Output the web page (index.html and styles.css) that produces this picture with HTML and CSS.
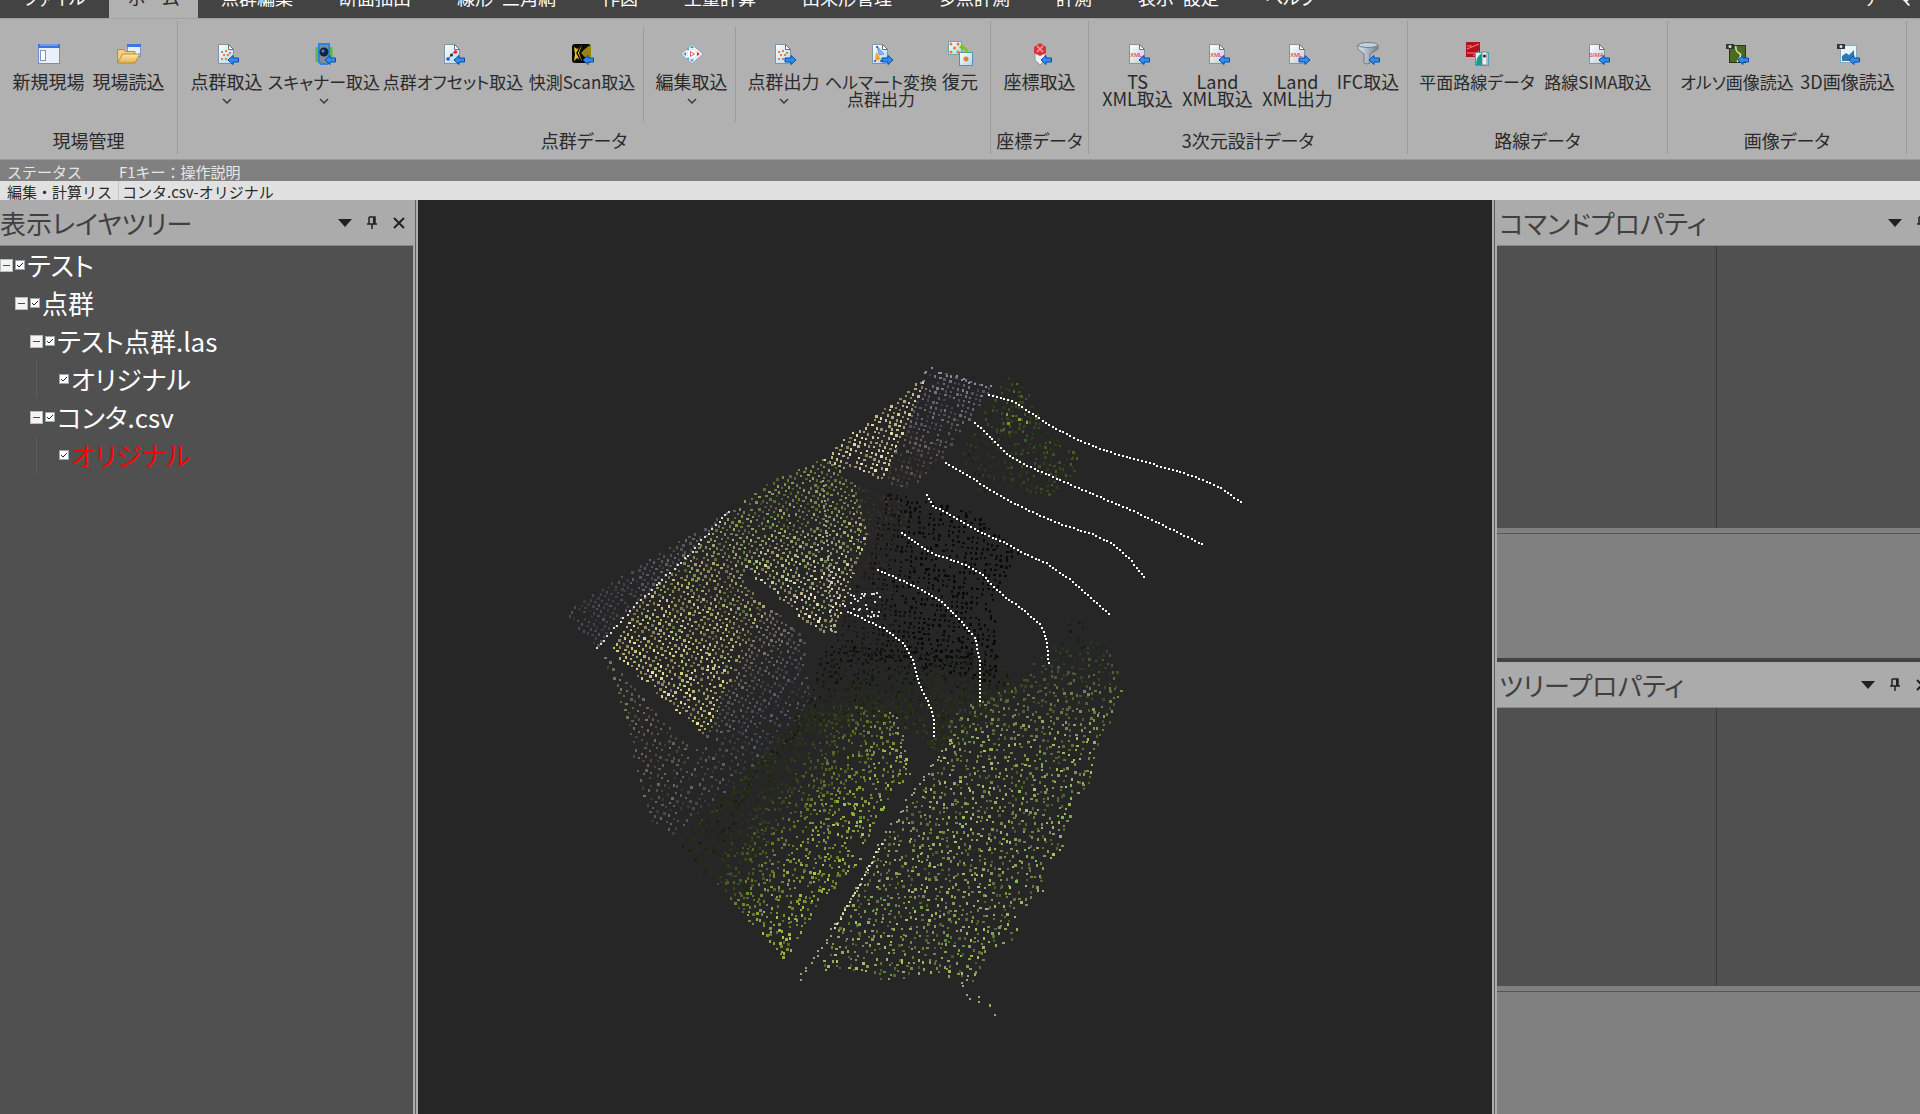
FILE: index.html
```html
<!DOCTYPE html>
<html lang="ja">
  <head>
    <meta charset="UTF-8" />
    <meta name="viewport" content="width=device-width, initial-scale=1.0" />
    <title>点群編集</title>
    <link rel="stylesheet" href="styles.css" />
  </head>
  <body>
    <!-- 共通アイコン -->
    <svg class="defs" width="0" height="0" aria-hidden="true">
      <defs>
        <linearGradient id="paper" x1="0" y1="0" x2="1" y2="1">
          <stop offset="0" stop-color="#fff" />
          <stop offset="1" stop-color="#a9d8ee" />
        </linearGradient>
        <linearGradient id="paper2" x1="0" y1="0" x2="1" y2="1">
          <stop offset="0" stop-color="#fff" />
          <stop offset="1" stop-color="#c3cbd6" />
        </linearGradient>
        <linearGradient id="folder" x1="0" y1="0" x2="0" y2="1">
          <stop offset="0" stop-color="#ffe9a8" />
          <stop offset="1" stop-color="#e5b050" />
        </linearGradient>
        <linearGradient id="steel" x1="0" y1="0" x2="1" y2="0">
          <stop offset="0" stop-color="#dfe8ee" />
          <stop offset="1" stop-color="#71828f" />
        </linearGradient>
      </defs>
      <symbol id="doc" viewBox="0 0 26 26">
        <path d="M4.500 3.500h10l5 5v14h-15z" fill="url(#paper)" stroke="#7f93a3" />
        <path d="M14.500 3.500v5h5z" fill="#fff" stroke="#66727d" />
      </symbol>
      <symbol id="doc2" viewBox="0 0 26 26">
        <path d="M4.500 3.500h10l5 5v14h-15z" fill="url(#paper2)" stroke="#8791a0" />
        <path d="M14.500 3.500v5h5z" fill="#fff" stroke="#66727d" />
      </symbol>
      <symbol id="in" viewBox="0 0 26 26">
        <path d="M14 19l5-4.500v2.500h5.500v4H19v2.500z" fill="#2f8df0" stroke="#0b4aa8" />
      </symbol>
      <symbol id="out" viewBox="0 0 26 26">
        <path d="M25 19l-5-4.500v2.500h-6v4h6v2.500z" fill="#2f8df0" stroke="#0b4aa8" />
      </symbol>
      <symbol id="dots" viewBox="0 0 26 26">
        <g fill="#ee7a45">
          <rect x="7" y="10" width="2" height="2" /><rect x="11" y="9" width="2" height="2" />
          <rect x="15" y="11" width="2" height="2" /><rect x="9" y="13" width="2" height="2" />
          <rect x="13" y="13" width="2" height="2" /><rect x="7" y="17" width="2" height="2" />
          <rect x="11" y="17" width="2" height="2" />
        </g>
      </symbol>
      <symbol id="chev" viewBox="0 0 10 6">
        <path d="M1 1l4 4 4-4" fill="none" stroke="#3a3a3a" stroke-width="1.500" />
      </symbol>
      <symbol id="pin" viewBox="0 0 12 14">
        <path d="M3 1h6v7M3 1v7M1 8h10M6 8v5" fill="none" stroke="#222" stroke-width="1.500" />
        <path d="M7 1h2v7H7z" fill="#222" />
      </symbol>
      <symbol id="close" viewBox="0 0 12 12">
        <path d="M1 1l10 10M11 1L1 11" stroke="#222" stroke-width="2" />
      </symbol>
      <symbol id="down" viewBox="0 0 14 8">
        <path d="M0 0h14L7 8z" fill="#222" />
      </symbol>
    </svg>

    <nav class="tabs">
      <button class="tab tab-file">ファイル</button>
      <button class="tab tab-home current">ホーム</button>
      <button class="tab">点群編集</button>
      <button class="tab">断面抽出</button>
      <button class="tab">線形･三角網</button>
      <button class="tab">作図</button>
      <button class="tab">土量計算</button>
      <button class="tab">出来形管理</button>
      <button class="tab">多点計測</button>
      <button class="tab">計測</button>
      <button class="tab">表示･設定</button>
      <button class="tab">ヘルプ</button>
      <button class="tab tab-theme">テーマ</button>
    </nav>

    <div class="ribbon">
      <section class="group">
        <div class="tools">
          <button class="tool w4">
            <svg class="icon" viewBox="0 0 26 26">
              <rect x="2.500" y="3.500" width="21" height="19" fill="#e9effc" stroke="#6f8fd0" />
              <path d="M2 3h22v4H2z" fill="#3f74dc" />
              <path d="M4 4h18" stroke="#9fc0ff" />
              <rect x="4.500" y="9.500" width="5" height="10" fill="#fff" stroke="#8494b8" />
            </svg>
            <span>新規現場</span>
          </button>
          <button class="tool w4">
            <svg class="icon" viewBox="0 0 26 26">
              <rect x="11.500" y="3.500" width="13" height="12" fill="#e9effc" stroke="#7c95cc" />
              <path d="M11 3h14v3H11z" fill="#3f74dc" />
              <path d="M1.500 21V8.500h6l2 2H19v4" fill="#f3cf7c" stroke="#b98a3a" />
              <path d="M1.500 22l5-9H24l-5 9z" fill="url(#folder)" stroke="#b98a3a" />
            </svg>
            <span>現場読込</span>
          </button>
        </div>
        <h2>現場管理</h2>
      </section>

      <section class="group">
        <div class="tools">
          <button class="tool w4">
            <svg class="icon" viewBox="0 0 26 26"><use href="#doc" /><use href="#dots" /><use href="#in" /></svg>
            <span>点群取込</span>
            <svg class="chev"><use href="#chev" /></svg>
          </button>
          <button class="tool w6">
            <svg class="icon" viewBox="0 0 26 26">
              <path d="M6 6v15M20 6v15" stroke="#58b948" stroke-width="3" />
              <path d="M8 3h10v18l-2 2h-6l-2-2z" fill="#7f8b98" stroke="#2c83e6" stroke-width="2" />
              <circle cx="13" cy="11" r="4.500" fill="#15233c" />
              <circle cx="12" cy="10" r="1.500" fill="#4c8ad8" />
              <use href="#in" />
            </svg>
            <span>スキャナー取込</span>
            <svg class="chev"><use href="#chev" /></svg>
          </button>
          <button class="tool w8">
            <svg class="icon" viewBox="0 0 26 26">
              <use href="#doc" />
              <path d="M8 18l7-8" stroke="#5a6a86" />
              <circle cx="8" cy="18" r="1.800" fill="#2c50d8" />
              <circle cx="11.500" cy="14" r="1.600" fill="#334" />
              <circle cx="15.500" cy="11" r="1.800" fill="#e22" />
              <use href="#in" />
            </svg>
            <span>点群オフセット取込</span>
          </button>
          <button class="tool w6">
            <svg class="icon" viewBox="0 0 26 26">
              <rect x="3" y="3" width="19" height="19" rx="3" fill="#080806" />
              <path d="M22 4v16q-5-2-10-8 5-6 10-8z" fill="#9a8212" />
              <path d="M5 6l3 2 5-4-3 8 3 8-5-3-3 3 1-7z" fill="#e8c31a" />
              <path d="M12 4l-4 8 4 8" fill="none" stroke="#080806" stroke-width="1.500" />
              <use href="#in" />
            </svg>
            <span>快測Scan取込</span>
          </button>
          <i class="sep"></i>
          <button class="tool w4">
            <svg class="icon" viewBox="0 0 26 26">
              <path d="M13 3.500L24 13 13 22.500 2 13z" fill="#f4f7fb" stroke="#9aa5b3" />
              <circle cx="13" cy="13" r="5" fill="#fff" stroke="#d4dbe4" />
              <path d="M11.500 10.500l4 2.500-4 2.500z" fill="none" stroke="#d66565" />
              <path d="M4 13l3-2v4zM13 4.500l2 2.500h-4zM13 21l2-2.500h-4zM7 9l3-2v2zM7 17l3 2v-2z" fill="#3a9ac6" />
              <path d="M18 11l3 2-3 2z" fill="#e22c2c" />
            </svg>
            <span>編集取込</span>
            <svg class="chev"><use href="#chev" /></svg>
          </button>
          <i class="sep"></i>
          <button class="tool w4">
            <svg class="icon" viewBox="0 0 26 26"><use href="#doc" /><use href="#dots" /><use href="#out" /></svg>
            <span>点群出力</span>
            <svg class="chev"><use href="#chev" /></svg>
          </button>
          <button class="tool w6">
            <svg class="icon" viewBox="0 0 26 26">
              <use href="#doc" />
              <path d="M9 5l7 8-5 1z" fill="#8cb2f0" stroke="#4569c0" stroke-width=".5" />
              <path d="M8 11l5 7-6 2z" fill="#f5a32c" />
              <circle cx="9" cy="6" r="1" fill="#2548b8" /><circle cx="7" cy="20" r="1" fill="#2548b8" />
              <circle cx="13" cy="20" r="1" fill="#2548b8" />
              <use href="#out" />
            </svg>
            <span>ヘルマート変換<br />点群出力</span>
          </button>
          <button class="tool w2">
            <svg class="icon" viewBox="0 0 26 26">
              <rect x="1.500" y="0.500" width="13" height="13" fill="url(#paper)" stroke="#6aa6b6" />
              <g fill="#ee7a30">
                <circle cx="4" cy="3" r="1.500" /><circle cx="11" cy="3" r="1.500" /><circle cx="7.500" cy="7" r="1.500" />
                <circle cx="4" cy="11" r="1.500" /><circle cx="11" cy="11" r="1.500" />
              </g>
              <rect x="12.500" y="11.500" width="13" height="13" fill="url(#paper)" stroke="#5494a8" />
              <circle cx="19" cy="18" r="2.500" fill="#ee7a30" />
              <path d="M20 12q0-5-5-6" fill="none" stroke="#77c30e" stroke-width="2" />
              <path d="M16 3v6l-4-3z" fill="#77c30e" />
            </svg>
            <span>復元</span>
          </button>
        </div>
        <h2>点群データ</h2>
      </section>

      <section class="group">
        <div class="tools">
          <button class="tool w4">
            <svg class="icon" viewBox="0 0 26 26">
              <path d="M8 9h10v10l-5 5-5-5z" fill="#eceff3" stroke="#9097a2" />
              <path d="M13 2l6 4v6l-6 3-6-3V6z" fill="#d9333d" />
              <path d="M10 5l6 6M16 5l-6 6" stroke="#ff9ca0" stroke-width="1.500" />
              <use href="#in" />
            </svg>
            <span>座標取込</span>
          </button>
        </div>
        <h2>座標データ</h2>
      </section>

      <section class="group">
        <div class="tools">
          <button class="tool w4">
            <svg class="icon" viewBox="0 0 26 26"><use href="#doc2" /><text class="mark" x="5" y="16">XML</text><use href="#in" /></svg>
            <span>TS<br />XML取込</span>
          </button>
          <button class="tool w4">
            <svg class="icon" viewBox="0 0 26 26"><use href="#doc2" /><text class="mark" x="5" y="16">XML</text><use href="#in" /></svg>
            <span>Land<br />XML取込</span>
          </button>
          <button class="tool w4">
            <svg class="icon" viewBox="0 0 26 26"><use href="#doc2" /><text class="mark" x="5" y="16">XML</text><use href="#out" /></svg>
            <span>Land<br />XML出力</span>
          </button>
          <button class="tool w3">
            <svg class="icon" viewBox="0 0 26 26">
              <path d="M3 4v4l6 5v9q3 2 6 0v-9l8-5V4z" fill="url(#steel)" stroke="#6c7b88" />
              <ellipse cx="13" cy="4" rx="10" ry="2.500" fill="#c3d0d9" stroke="#71808c" />
              <use href="#in" />
            </svg>
            <span>IFC取込</span>
          </button>
        </div>
        <h2>3次元設計データ</h2>
      </section>

      <section class="group">
        <div class="tools">
          <button class="tool w7">
            <svg class="icon" viewBox="0 0 26 26">
              <rect x="2" y="1" width="14" height="15" fill="#b80f18" />
              <path d="M3 8l12-5M3 12h12M3 5h5M9 15l6-5" stroke="#ef8a8a" />
              <rect x="11.500" y="11.500" width="13" height="13" fill="#dff3f7" stroke="#4aa0b4" />
              <path d="M12 24q0-9 6-12v12z" fill="#1a9a8e" />
              <path d="M18 11h5v13h-5z" fill="#eef1f4" stroke="#7c8791" />
              <circle cx="20.500" cy="15" r="1.500" fill="#222" />
            </svg>
            <span>平面路線データ</span>
          </button>
          <button class="tool w7">
            <svg class="icon" viewBox="0 0 26 26"><use href="#doc2" /><text class="mark" x="4" y="16">SIMA</text><use href="#in" /></svg>
            <span>路線SIMA取込</span>
          </button>
        </div>
        <h2>路線データ</h2>
      </section>

      <section class="group">
        <div class="tools">
          <button class="tool w7">
            <svg class="icon" viewBox="0 0 26 26">
              <rect x="5.500" y="4.500" width="16" height="17" fill="#4a6a20" stroke="#26331a" />
              <path d="M12 5q-1 5 3 7t-2 9" fill="none" stroke="#d8e2b0" stroke-width="1.500" />
              <path d="M2 3h8v5H2z" fill="#333" /><circle cx="6" cy="5.500" r="1.500" fill="#ddd" />
              <use href="#in" />
            </svg>
            <span>オルソ画像読込</span>
          </button>
          <button class="tool w5">
            <svg class="icon" viewBox="0 0 26 26">
              <rect x="5.500" y="4.500" width="16" height="17" fill="#e8f4fc" stroke="#8ba6b8" />
              <path d="M7 20v-5l4-3 3 2 5-5v11z" fill="#2f78ae" />
              <path d="M2 3h8v5H2z" fill="#333" /><circle cx="6" cy="5.500" r="1.500" fill="#ddd" />
              <use href="#in" />
            </svg>
            <span>3D画像読込</span>
          </button>
        </div>
        <h2>画像データ</h2>
      </section>
    </div>

    <div class="status">
      <span class="cell">ステータス</span>
      <span>F1キー：操作説明</span>
    </div>
    <div class="joblist">
      <span class="cell">編集・計算リス</span>
      <span>コンタ.csv-オリジナル</span>
    </div>

    <main class="work">
      <aside class="side">
        <header class="bar">
          <h1>表示レイヤツリー</h1>
          <button class="act" aria-label="メニュー"><svg width="14" height="8"><use href="#down" /></svg></button>
          <button class="act" aria-label="固定"><svg width="12" height="14"><use href="#pin" /></svg></button>
          <button class="act" aria-label="閉じる"><svg width="12" height="12"><use href="#close" /></svg></button>
        </header>
        <ul class="tree">
          <li>
            <div class="row"><button class="fold" aria-label="折りたたむ"></button><label><input type="checkbox" checked />テスト</label></div>
            <ul>
              <li>
                <div class="row"><button class="fold" aria-label="折りたたむ"></button><label><input type="checkbox" checked />点群</label></div>
                <ul>
                  <li>
                    <div class="row"><button class="fold" aria-label="折りたたむ"></button><label><input type="checkbox" checked />テスト点群.las</label></div>
                    <ul>
                      <li><div class="row leaf"><label><input type="checkbox" checked />オリジナル</label></div></li>
                    </ul>
                  </li>
                  <li>
                    <div class="row"><button class="fold" aria-label="折りたたむ"></button><label><input type="checkbox" checked />コンタ.csv</label></div>
                    <ul>
                      <li><div class="row leaf active"><label><input type="checkbox" checked />オリジナル</label></div></li>
                    </ul>
                  </li>
                </ul>
              </li>
            </ul>
          </li>
        </ul>
      </aside>

      <div class="split"></div>
      <div class="view"><canvas id="cloud"></canvas></div>
      <div class="split"></div>

      <aside class="props">
        <section class="prop">
          <header class="bar bar-wide">
            <h1>コマンドプロパティ</h1>
            <button class="act" aria-label="メニュー"><svg width="14" height="8"><use href="#down" /></svg></button>
            <button class="act" aria-label="固定"><svg width="12" height="14"><use href="#pin" /></svg></button>
          </header>
          <div class="sheet"><div></div><div></div></div>
          <div class="note"></div>
        </section>
        <section class="prop prop-tree">
          <header class="bar bar-wide">
            <h1>ツリープロパティ</h1>
            <button class="act" aria-label="メニュー"><svg width="14" height="8"><use href="#down" /></svg></button>
            <button class="act" aria-label="固定"><svg width="12" height="14"><use href="#pin" /></svg></button>
            <button class="act" aria-label="閉じる"><svg width="12" height="12"><use href="#close" /></svg></button>
          </header>
          <div class="sheet"><div></div><div></div></div>
          <div class="note"></div>
        </section>
      </aside>
    </main>
    <script src="cloud.js"></script>
  </body>
</html>
```
FILE: styles.css
```css
* {
  margin: 0;
  padding: 0;
  box-sizing: border-box;
}

body {
  display: flex;
  flex-direction: column;
  min-height: 100vh;
  overflow: hidden;
  background-color: #808080;
  color: #2a2a2a;
  font-family: "Noto Sans CJK JP", sans-serif;
  font-size: 18px;
}

button {
  border: 0;
  background: none;
  color: inherit;
  font: inherit;
  white-space: nowrap;
  cursor: pointer;
}

ul {
  list-style: none;
}

.defs {
  position: absolute;
}

/* タブ */
.tabs {
  display: flex;
  align-items: flex-end;
  height: 18px;
  overflow: hidden;
  background-color: #434343;
  color: #fff;
  font-feature-settings: "palt";
}

.tab {
  flex: none;
  padding: 0 23px;
  line-height: 42px;
}

.tab-file {
  width: 109px;
  padding: 0;
}

.tab-home {
  width: 89px;
  padding: 0;
}

.tab-theme {
  margin-left: auto;
  padding: 0 6px;
}

.tabs .current {
  background-color: #b1b1b1;
  color: #2a2a2a;
}

/* リボン */
.ribbon {
  display: flex;
  height: 142px;
  padding: 2px 0 5px;
  border-top: 1px solid #a0a0a0;
  border-bottom: 1px solid #999;
  background-color: #b1b1b1;
  font-feature-settings: "palt";
}

.group {
  display: flex;
  flex: none;
  flex-direction: column;
  justify-content: space-between;
  padding: 0 12px;
  border-right: 1px solid #9a9a9a;
}

.group h2 {
  margin: 0 -12px 4px;
  font-size: 18px;
  font-weight: normal;
  line-height: 20px;
  text-align: center;
}

.tools {
  display: flex;
  gap: 7px;
}

.tool {
  display: flex;
  flex-direction: column;
  align-items: center;
  padding-top: 20px;
  line-height: 17px;
}

.icon {
  flex: none;
  width: 26px;
  height: 26px;
  margin-bottom: 6px;
}

.chev {
  width: 10px;
  height: 6px;
  margin-top: 8px;
}

.mark {
  fill: #e02020;
  font: 6px "Liberation Sans", sans-serif;
}

.sep {
  width: 1px;
  height: 95px;
  margin: 6px 4px 0 0;
  background-color: #9a9a9a;
}

.w2 { width: 36px; }
.w3 { width: 54px; }
.w4 { width: 73px; }
.w5 { width: 93px; }
.w6 { width: 108px; }
.w7 { width: 114px; }
.w8 { width: 136px; }

.w6,
.w7,
.w8 {
  font-size: 17px;
}

/* ステータス */
.status,
.joblist {
  display: flex;
  font-size: 15px;
  white-space: nowrap;
}

.status {
  height: 21px;
  padding-left: 7px;
  line-height: 24px;
  color: #e6e6e6;
}

.joblist {
  height: 19px;
  padding-left: 7px;
  background-color: #e1e1e1;
  line-height: 22px;
}

.cell {
  width: 112px;
}

.joblist .cell {
  margin-right: 3px;
  border-right: 1px solid #c4c4c4;
}

/* 作業エリア */
.work {
  display: grid;
  flex: 1;
  grid-template-columns: 413px 5px minmax(0, 1fr) 5px 423px;
}

.bar {
  display: flex;
  align-items: center;
  height: 46px;
  padding-right: 1px;
  border-bottom: 1px solid #8a8a8a;
  background-color: #ababab;
  color: #404040;
}

.bar h1 {
  flex: 1;
  font-size: 26px;
  font-weight: normal;
  line-height: 36px;
  white-space: nowrap;
  font-feature-settings: "palt";
}

.act {
  display: flex;
  align-items: center;
  justify-content: center;
  width: 27px;
  height: 27px;
}

.side {
  background-color: #505050;
}

.split {
  border: solid #ababab;
  border-width: 0 2px;
  background-color: #606060;
}

.tree {
  color: #fff;
  font-size: 26px;
  font-feature-settings: "palt";
}

.tree ul {
  margin-left: 15px;
}

.tree ul ul ul {
  border-left: 1px solid #5c5c5c;
  margin-left: 6px;
  padding-left: 8px;
}

.row {
  display: flex;
  align-items: center;
  gap: 2px;
  height: 38px;
}

.leaf {
  padding-left: 14px;
}

.row label {
  display: flex;
  align-items: center;
  gap: 2px;
  line-height: 38px;
  white-space: nowrap;
}

.fold {
  display: flex;
  align-items: center;
  justify-content: center;
  width: 13px;
  height: 13px;
  border: 1px solid #bbb;
  background-color: #f4f4f4;
}

.fold::before {
  width: 7px;
  height: 1px;
  background-color: #2b4bb0;
  content: "";
}

.row input {
  width: 10px;
  height: 10px;
  border: 1px solid #9aa;
  background: #fff url("data:image/svg+xml,%3Csvg xmlns='http://www.w3.org/2000/svg' viewBox='0 0 8 8'%3E%3Cpath d='M1 4l2 2 4-4' fill='none' stroke='%23222'/%3E%3C/svg%3E");
  appearance: none;
}

.active {
  color: #f00;
}

.view {
  overflow: hidden;
  background-color: #262626;
}

.view canvas {
  display: block;
}

/* プロパティ */
.props {
  display: flex;
  flex-direction: column;
  overflow: hidden;
}

.prop {
  border-bottom: 4px solid #434343;
}

.prop-tree {
  flex: 1;
  border-bottom: 0;
}

.bar-wide {
  margin-right: -15px;
  padding: 0 0 0 2px;
}

.sheet {
  display: grid;
  grid-template-columns: 220px 1fr;
  height: 282px;
  background-color: #505050;
}

.prop-tree .sheet {
  height: 278px;
}

.sheet div:first-child {
  border-right: 1px solid #3a3a3a;
}

.note {
  height: 125px;
  margin-top: 5px;
  border-top: 1px solid #555;
}
```
FILE: cloud.js
```js
var canvas = document.getElementById("cloud");
var view = canvas.parentNode;
canvas.width = view.clientWidth;
canvas.height = view.clientHeight;
var ctx = canvas.getContext("2d");

// 毎回同じ点群になるように固定シードの乱数を使う
var seed = 7;
function rnd() {
  seed = (seed * 16807) % 2147483647;
  return seed / 2147483647;
}

function dot(x, y, c, w, h) {
  ctx.fillStyle = "rgb(" + c.join(",") + ")";
  ctx.fillRect(Math.round(x), Math.round(y), w || 2, h || 2);
}

function inside(p, x, y) {
  var r = false;
  for (var i = 0, j = p.length - 1; i < p.length; j = i++) {
    if (p[i][1] > y !== p[j][1] > y &&
        x < ((p[j][0] - p[i][0]) * (y - p[i][1])) / (p[j][1] - p[i][1]) + p[i][0]) {
      r = !r;
    }
  }
  return r;
}

// 多角形の中を傾いた格子の点で埋める
// step:間隔 rot:傾き jitter:ばらつき keep:残す割合 from,to:色が a から b に変わる軸 noise:明るさのむら
function fill(p, o) {
  var cos = Math.cos(o.rot), sin = Math.sin(o.rot);
  for (var v = -900; v < 1100; v += o.step) {
    for (var u = -200; u < 1400; u += o.step) {
      var x = u * cos - v * sin + (rnd() - 0.5) * o.jitter;
      var y = u * sin + v * cos + (rnd() - 0.5) * o.jitter;
      if (!inside(p, x, y) || rnd() > o.keep) continue;
      var vx = o.to[0] - o.from[0], vy = o.to[1] - o.from[1];
      var t = ((x - o.from[0]) * vx + (y - o.from[1]) * vy) / (vx * vx + vy * vy);
      t = Math.max(0, Math.min(1, t));
      var n = 1 - o.noise * rnd();
      var green = rnd() < (o.green || 0) ? 0.8 : 1;
      var c = o.a.map(function (s, i) {
        return Math.round((s + (o.b[i] - s) * t) * n * (i === 1 ? 1 : green));
      });
      dot(x, y, c, rnd() < 0.3 ? 3 : 2, rnd() < 0.5 ? 3 : 2);
    }
  }
}

// 折れ線に沿って等間隔に点を打つ
function line(p, step, c, jitter) {
  var rest = 0;
  for (var i = 1; i < p.length; i++) {
    var dx = p[i][0] - p[i - 1][0], dy = p[i][1] - p[i - 1][1];
    var len = Math.sqrt(dx * dx + dy * dy);
    var d = rest;
    for (; d < len; d += step) {
      dot(p[i - 1][0] + (dx * d) / len + (rnd() - 0.5) * jitter,
          p[i - 1][1] + (dy * d) / len + (rnd() - 0.5) * jitter, c);
    }
    rest = d - len;
  }
}

// 左端の灰色の法面
fill([[145, 412], [310, 310], [274, 350], [177, 447]],
  { step: 5, rot: 0.55, jitter: 1, keep: 0.92, from: [180, 400], to: [230, 420], a: [78, 78, 90], b: [108, 108, 120], noise: 0.4 });
// 上の屋根
fill([[501, 180], [423, 240], [404, 260], [464, 280], [480, 243], [510, 175]],
  { step: 5, rot: 0.4, jitter: 1, keep: 0.95, from: [430, 220], to: [460, 260], a: [220, 216, 154], b: [244, 232, 180], noise: 0.45 });
fill([[510, 168], [574, 187], [521, 260], [489, 292], [464, 280], [480, 243]],
  { step: 5, rot: 0.3, jitter: 1, keep: 0.85, from: [520, 180], to: [490, 270], a: [128, 126, 148], b: [96, 88, 80], noise: 0.5 });
// 右上の樹木
fill([[588, 172], [609, 190], [627, 230], [664, 257], [657, 273], [627, 297], [586, 283], [563, 297], [531, 260], [565, 205]],
  { step: 5, rot: 0.3, jitter: 3, keep: 0.7, from: [550, 260], to: [610, 220], a: [56, 58, 40], b: [78, 98, 40], noise: 0.5, green: 0.3 });
fill([[592, 178], [609, 190], [612, 225], [580, 235]],
  { step: 7, rot: 0.3, jitter: 5, keep: 0.5, from: [590, 180], to: [600, 230], a: [100, 130, 40], b: [150, 180, 80], noise: 0.5 });
// 中央の畑
fill([[352, 280], [404, 257], [439, 282], [448, 337], [416, 433], [397, 430], [329, 371], [274, 350], [315, 307]],
  { step: 5, rot: 0.55, jitter: 1, keep: 0.94, from: [370, 300], to: [390, 390], a: [150, 158, 92], b: [244, 232, 180], noise: 0.5, green: 0.2 });
fill([[274, 350], [329, 371], [324, 380], [350, 410], [310, 480], [286, 536], [271, 523], [222, 478], [192, 450], [216, 405]],
  { step: 5, rot: 0.55, jitter: 1, keep: 0.94, from: [320, 370], to: [260, 450], a: [168, 162, 108], b: [236, 226, 146], noise: 0.5, green: 0.15 });
fill([[326, 382], [361, 413], [388, 440], [385, 470], [330, 530], [286, 536], [310, 480], [350, 410]],
  { step: 5, rot: 0.55, jitter: 1, keep: 0.88, from: [320, 430], to: [370, 480], a: [142, 136, 106], b: [92, 90, 106], noise: 0.4 });
// 左下の灰色の斜面
fill([[180, 447], [190, 455], [214, 484], [236, 512], [274, 547], [296, 538], [330, 530], [385, 470], [397, 500], [340, 560], [290, 605], [255, 633], [232, 623], [198, 487]],
  { step: 6, rot: 0.5, jitter: 2, keep: 0.88, from: [210, 500], to: [350, 560], a: [130, 124, 92], b: [84, 88, 104], noise: 0.5 });
// 中央の影
fill([[465, 290], [503, 300], [549, 307], [600, 350], [575, 400], [581, 483], [420, 450], [416, 433], [453, 350]],
  { step: 5, rot: 0.1, jitter: 2, keep: 0.72, from: [440, 380], to: [500, 380], a: [34, 32, 28], b: [12, 13, 10], noise: 0.4 });
fill([[439, 285], [490, 300], [490, 330], [440, 400], [430, 400]],
  { step: 5, rot: 0.3, jitter: 2, keep: 0.6, from: [440, 300], to: [480, 380], a: [66, 60, 48], b: [44, 40, 34], noise: 0.3 });
fill([[405, 445], [581, 450], [600, 490], [521, 560], [480, 520], [397, 520], [330, 590], [258, 640], [300, 600], [390, 500]],
  { step: 5, rot: 0.2, jitter: 4, keep: 0.8, from: [480, 440], to: [490, 530], a: [16, 20, 12], b: [56, 76, 22], noise: 0.5 });
// 下の草地
fill([[397, 497], [470, 512], [485, 540], [489, 577], [462, 613], [439, 667], [400, 700], [379, 740], [365, 760], [306, 693], [260, 643], [342, 563]],
  { step: 5, rot: 0.4, jitter: 4, keep: 0.75, from: [360, 560], to: [424, 606], a: [38, 50, 18], b: [172, 196, 76], noise: 0.45, green: 0.25 });
fill([[531, 515], [600, 475], [640, 440], [655, 413], [694, 450], [703, 490], [696, 513], [680, 540], [673, 580], [655, 600], [650, 625], [641, 655], [625, 660], [625, 690], [600, 710], [597, 740], [570, 750], [554, 780], [500, 774], [470, 782], [440, 770], [397, 770], [462, 647], [521, 560]],
  { step: 6, rot: 0.4, jitter: 5, keep: 0.96, from: [590, 440], to: [600, 540], a: [34, 50, 30], b: [176, 194, 104], noise: 0.55, green: 0.25 });

// 道路と縁石
line([[531, 543], [498, 587], [462, 643], [416, 727], [379, 782]], 5, [160, 160, 120], 5);
line([[462, 643], [440, 685], [416, 727]], 5, [224, 224, 176], 2);
line([[472, 510], [482, 540], [490, 575]], 5, [150, 138, 96], 6);
line([[544, 785], [558, 797], [577, 813]], 5, [150, 170, 100], 9);
line([[310, 310], [274, 350], [216, 405], [177, 447]], 5, [220, 220, 206], 2);
line([[404, 280], [409, 350], [413, 432]], 5, [150, 165, 140], 1);
line([[501, 182], [510, 168], [574, 187]], 5, [140, 138, 156], 4);

for (var i = 0; i < 30; i++) {
  dot(423 + rnd() * 40, 392 + rnd() * 24, [220, 220, 224]);
}

// コンタ
[
  [[570, 194], [595, 201], [609, 210], [632, 225], [655, 237], [687, 250], [733, 263], [774, 275], [802, 287], [823, 302]],
  [[556, 222], [572, 237], [588, 253], [609, 265], [650, 283], [714, 310], [756, 330], [785, 344]],
  [[527, 262], [554, 278], [586, 298], [613, 311], [641, 323], [673, 333], [694, 343], [710, 357], [726, 377]],
  [[508, 294], [514, 305], [535, 316], [563, 332], [586, 342], [604, 352], [627, 362], [650, 378], [673, 398], [692, 415]],
  [[483, 332], [512, 352], [544, 363], [563, 373], [574, 385], [586, 396], [606, 410], [622, 424], [628, 440], [630, 466]],
  [[459, 369], [489, 382], [521, 399], [540, 418], [556, 437], [561, 460], [561, 500]],
  [[432, 412], [466, 428], [485, 443], [494, 460], [499, 480], [512, 507], [515, 517], [515, 536]]
].forEach(function (p) {
  line(p, 4, [255, 255, 255], 0);
});
```
